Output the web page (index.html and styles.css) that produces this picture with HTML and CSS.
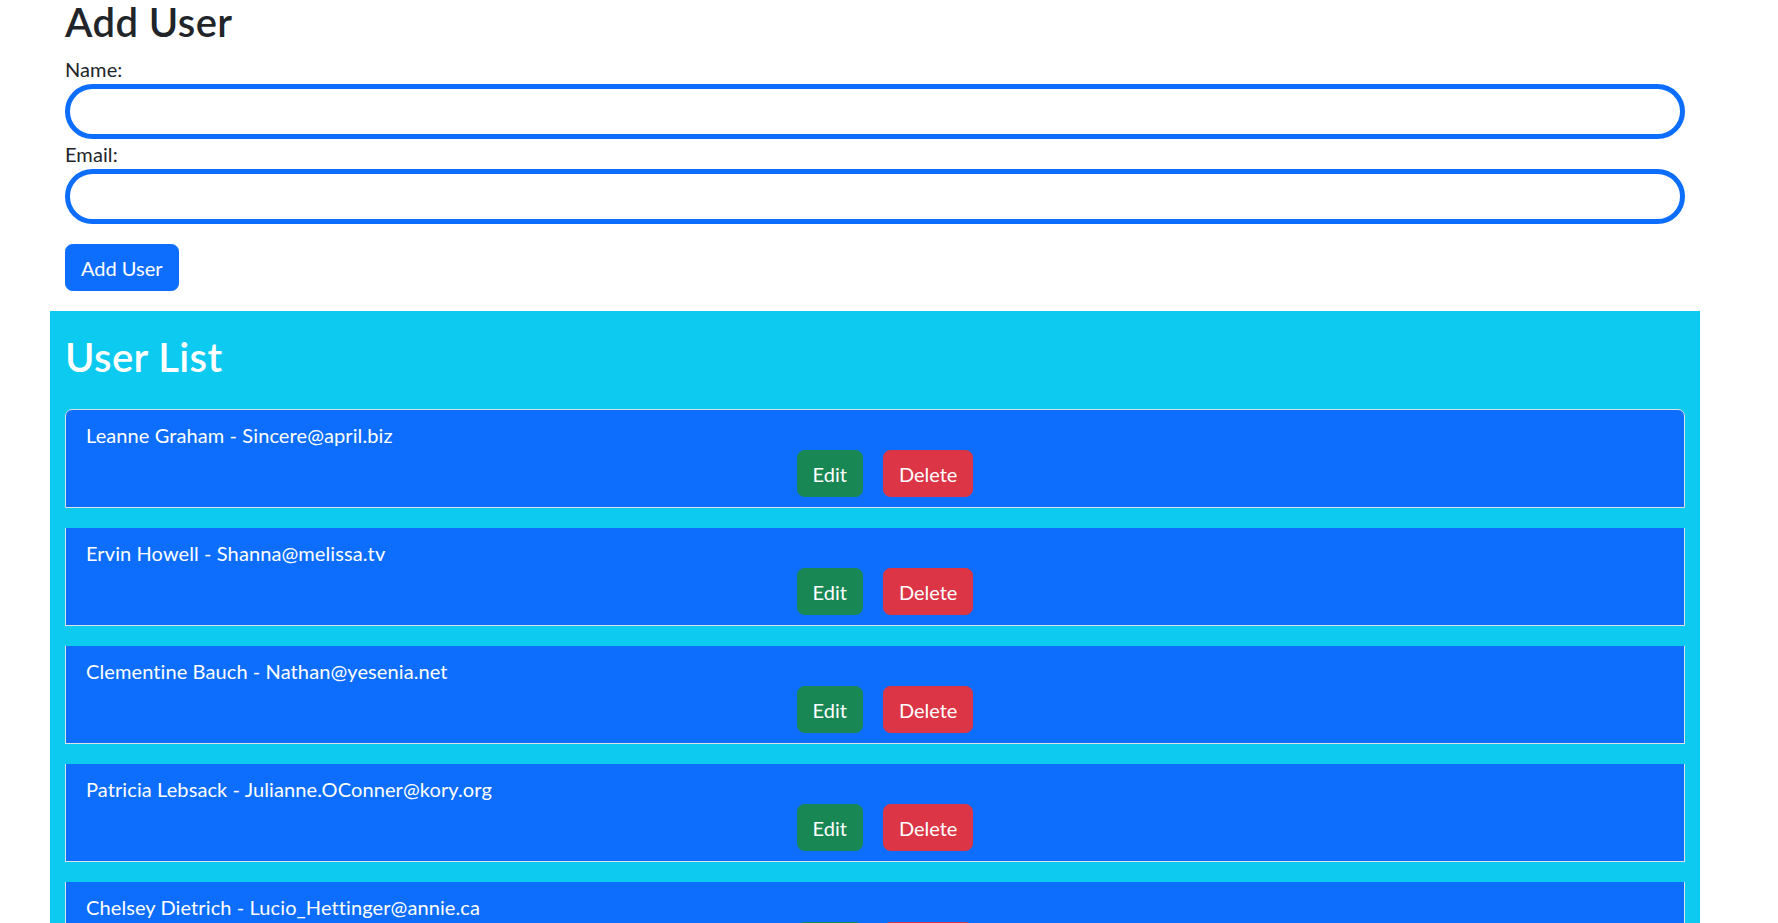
FILE: index.html
```html
<!DOCTYPE html>
<html lang="en">
<head>
<meta charset="utf-8">
<title>Users</title>
<link rel="stylesheet" href="styles.css">
</head>
<body>
<div class="page">
  <form class="add-form">
    <h2 class="title">Add User</h2>
    <label class="field-label" for="name">Name:</label>
    <input class="field-input" id="name" type="text">
    <label class="field-label" for="email">Email:</label>
    <input class="field-input" id="email" type="email">
    <button type="button" class="btn btn-primary add-btn">Add User</button>
  </form>

  <section class="user-section">
    <h2 class="title title-light">User List</h2>
    <ul class="user-list">
      <li class="user-item">
        <div class="user-text">Leanne Graham - Sincere@april.biz</div>
        <div class="user-actions"><button class="btn btn-success">Edit</button><button class="btn btn-danger">Delete</button></div>
      </li>
      <li class="user-item">
        <div class="user-text">Ervin Howell - Shanna@melissa.tv</div>
        <div class="user-actions"><button class="btn btn-success">Edit</button><button class="btn btn-danger">Delete</button></div>
      </li>
      <li class="user-item">
        <div class="user-text">Clementine Bauch - Nathan@yesenia.net</div>
        <div class="user-actions"><button class="btn btn-success">Edit</button><button class="btn btn-danger">Delete</button></div>
      </li>
      <li class="user-item">
        <div class="user-text">Patricia Lebsack - Julianne.OConner@kory.org</div>
        <div class="user-actions"><button class="btn btn-success">Edit</button><button class="btn btn-danger">Delete</button></div>
      </li>
      <li class="user-item">
        <div class="user-text">Chelsey Dietrich - Lucio_Hettinger@annie.ca</div>
        <div class="user-actions"><button class="btn btn-success">Edit</button><button class="btn btn-danger">Delete</button></div>
      </li>
      <li class="user-item">
        <div class="user-text">Mrs. Dennis Schulist - Karley_Dach@jasper.info</div>
        <div class="user-actions"><button class="btn btn-success">Edit</button><button class="btn btn-danger">Delete</button></div>
      </li>
      <li class="user-item">
        <div class="user-text">Kurtis Weissnat - Telly.Hoeger@billy.biz</div>
        <div class="user-actions"><button class="btn btn-success">Edit</button><button class="btn btn-danger">Delete</button></div>
      </li>
    </ul>
  </section>
</div>
</body>
</html>
```
FILE: styles.css
```css
html {
  scrollbar-width: none;
}
body {
  margin: 0;
  font-family: Lato, "Open Sans", sans-serif;
  font-size: 20px;
  line-height: 30px;
  letter-spacing: 0.1px;
  color: #212529;
  background: #fff;
}
.page {
  width: 1650px;
  margin-left: 50px;
}
.add-form {
  padding: 0 15px;
  margin: 0 0 20px;
  display: flex;
  flex-direction: column;
  align-items: stretch;
}
.title {
  font-size: 40px;
  line-height: 48px;
  font-weight: 600;
  letter-spacing: 0.4px;
  margin: -2px 0 8px;
}
.title-light {
  color: #fff;
  margin: 2px 0 28px;
}
.field-label {
  display: block;
}
.field-input {
  box-sizing: border-box;
  width: 100%;
  height: 55px;
  border: 5px solid #0d6efd;
  border-radius: 999px;
  padding: 0 20px;
  font: inherit;
  outline: none;
  background: #fff;
}
.btn {
  font: inherit;
  line-height: 30px;
  padding: 7.5px 15px;
  border: 1.25px solid transparent;
  border-radius: 7.5px;
  color: #fff;
  cursor: pointer;
}
.btn-primary {
  background: #0d6efd;
  border-color: #0d6efd;
}
.btn-success {
  background: #198754;
  border-color: #198754;
}
.btn-danger {
  background: #dc3545;
  border-color: #dc3545;
}
.add-btn {
  align-self: flex-start;
  margin-top: 20px;
}
.user-section {
  background: #0dcaf0;
  padding: 20px 15px 0;
  min-height: 700px;
}
.user-list {
  list-style: none;
  margin: 0;
  padding: 0;
}
.user-item {
  background: #0d6efd;
  color: #fff;
  border: 1px solid #dee2e6;
  border-top-width: 0;
  padding: 10px 20px;
  margin-bottom: 20px;
}
.user-item:first-child {
  border-top-width: 1px;
  border-radius: 7px 7px 0 0;
}
.user-item:last-child {
  border-radius: 0 0 7px 7px;
}
.user-actions {
  display: flex;
  justify-content: center;
}
.user-actions .btn {
  margin-left: 20px;
}
```
